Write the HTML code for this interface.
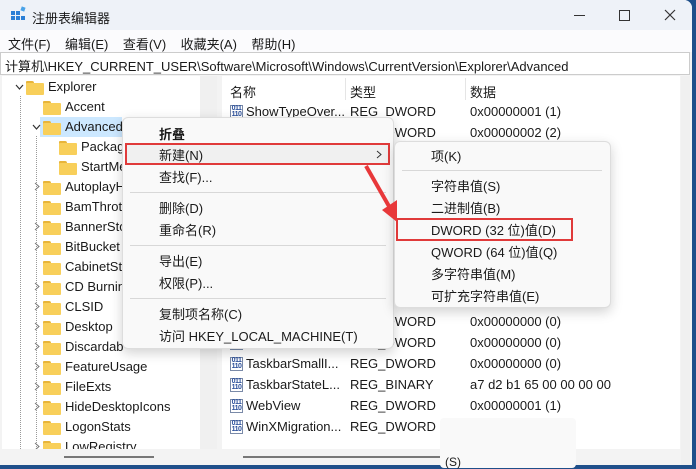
<!DOCTYPE html><html><head><meta charset="utf-8"><style>
*{margin:0;padding:0;box-sizing:border-box}
body{width:696px;height:468px;overflow:hidden;background:#1f4f8a;font-family:"Liberation Sans","Noto Sans CJK SC",sans-serif;font-size:13px;color:#1a1a1a;position:relative}
.a{position:absolute;white-space:nowrap}
.win{position:absolute;left:0;top:0;width:692px;height:465px;background:#f3f3f3;border-radius:0 8px 0 0;overflow:hidden}
.fold{position:absolute;width:18px;height:14px}
.fold:before{content:"";position:absolute;left:0;top:0;width:8px;height:4px;background:#e8b53a;border-radius:1px 2px 0 0}
.fold:after{content:"";position:absolute;left:0;top:2px;width:18px;height:12px;background:#f8cf5a;border-radius:1px}
.chev{position:absolute}
.ico{position:absolute;width:13px;height:14px;border:1px solid #7a8aa8;background:#fff;font-size:7px;line-height:6px;color:#2a4f9a;font-weight:bold;text-align:center;letter-spacing:-0.5px}
.menu{position:absolute;background:#f9f9f9;border:1px solid #ddd;border-radius:6px;box-shadow:0 4px 12px rgba(0,0,0,.18)}
.sep{position:absolute;height:1px;background:#d8d8d8}
</style></head><body>
<div class="win">
<div class="a" style="left:0;top:0;width:692px;height:30px;background:#eef2f8"></div>
<svg class="a" style="left:10px;top:6px" width="16" height="16"><rect x="1" y="5" width="4" height="4" fill="#2b7fd6"/><rect x="6" y="5" width="4" height="4" fill="#2b7fd6"/><rect x="1" y="10" width="4" height="4" fill="#2b7fd6"/><rect x="6" y="10" width="4" height="4" fill="#2b7fd6"/><rect x="11" y="10" width="4" height="4" fill="#2b7fd6"/><rect x="11" y="1" width="4" height="4" fill="#4aa3e8" transform="rotate(20 13 3)"/></svg>
<div class="a" style="left:32px;top:8px">注册表编辑器</div>
<div class="a" style="left:574px;top:15px;width:11px;height:1px;background:#333"></div>
<div class="a" style="left:619px;top:10px;width:11px;height:11px;border:1px solid #333"></div>
<svg class="a" style="left:664px;top:9px" width="12" height="12"><path d="M1 1L11 11M11 1L1 11" stroke="#333" stroke-width="1.2"/></svg>
<div class="a" style="left:0;top:30px;width:692px;height:22px;background:#fbfbfd"></div>
<div class="a" style="left:8px;top:34px">文件(F)&nbsp;&nbsp;&nbsp;&nbsp;编辑(E)&nbsp;&nbsp;&nbsp;&nbsp;查看(V)&nbsp;&nbsp;&nbsp;&nbsp;收藏夹(A)&nbsp;&nbsp;&nbsp;&nbsp;帮助(H)</div>
<div class="a" style="left:0;top:52px;width:690px;height:23px;background:#fff;border:1px solid #ccc"></div>
<div class="a" style="left:5px;top:56px">计算机\HKEY_CURRENT_USER\Software\Microsoft\Windows\CurrentVersion\Explorer\Advanced</div>
<div class="a" style="left:2px;top:76px;width:198px;height:373px;background:#fff;overflow:hidden"><div id="tree" style="position:absolute;left:-2px;top:-76px;width:200px;height:460px"></div></div>
<div class="a" style="left:200px;top:76px;width:17px;height:373px;background:#f0f0f0"></div>
<div class="a" style="left:64px;top:456px;width:90px;height:2px;background:#777"></div>
<div class="a" style="left:222px;top:76px;width:458px;height:373px;background:#fff"></div>
<div class="a" style="left:681px;top:76px;width:9px;height:389px;background:#f0f0f0"></div>
<div class="a" style="left:243px;top:456px;width:200px;height:2px;background:#777"></div>
<div class="a" style="left:345px;top:78px;width:1px;height:22px;background:#e5e5e5"></div>
<div class="a" style="left:465px;top:78px;width:1px;height:22px;background:#e5e5e5"></div>
<div class="a" style="left:230px;top:82px">名称</div><div class="a" style="left:350px;top:82px">类型</div><div class="a" style="left:470px;top:82px">数据</div>
<div id="list"></div>
</div>

<div class="menu" style="left:122px;top:117px;width:272px;height:232px"></div>
<div class="a" style="left:125px;top:143px;width:265px;height:22px;border:2px solid #e03a3a;background:#f0f0f0"></div>
<div class="a" style="left:159px;top:124px;font-weight:bold">折叠</div>
<div class="a" style="left:159px;top:145px">新建(N)</div>
<svg class="a" style="left:376px;top:150px" width="6" height="9"><path d="M1 1L5 4.5L1 8" stroke="#333" fill="none"/></svg>
<div class="a" style="left:159px;top:167px">查找(F)...</div>
<div class="sep" style="left:130px;top:192px;width:256px"></div>
<div class="a" style="left:159px;top:198px">删除(D)</div>
<div class="a" style="left:159px;top:220px">重命名(R)</div>
<div class="sep" style="left:130px;top:245px;width:256px"></div>
<div class="a" style="left:159px;top:251px">导出(E)</div>
<div class="a" style="left:159px;top:273px">权限(P)...</div>
<div class="sep" style="left:130px;top:298px;width:256px"></div>
<div class="a" style="left:159px;top:304px">复制项名称(C)</div>
<div class="a" style="left:159px;top:326px">访问 HKEY_LOCAL_MACHINE(T)</div>

<div class="menu" style="left:394px;top:141px;width:217px;height:167px"></div>
<div class="a" style="left:431px;top:146px">项(K)</div>
<div class="sep" style="left:402px;top:170px;width:200px"></div>
<div class="a" style="left:431px;top:176px">字符串值(S)</div>
<div class="a" style="left:431px;top:198px">二进制值(B)</div>
<div class="a" style="left:396px;top:218px;width:177px;height:23px;border:2px solid #e03a3a"></div>
<div class="a" style="left:431px;top:220px">DWORD (32 位)值(D)</div>
<div class="a" style="left:431px;top:242px">QWORD (64 位)值(Q)</div>
<div class="a" style="left:431px;top:264px">多字符串值(M)</div>
<div class="a" style="left:431px;top:286px">可扩充字符串值(E)</div>

<svg class="a" style="left:360px;top:160px" width="50" height="70"><path d="M6 6 L30 48" stroke="#e8383a" stroke-width="4"/><path d="M22 50 L37 62 L37 40 Z" fill="#e8383a"/></svg>

<div class="a" style="left:440px;top:418px;width:136px;height:50px;background:#f9f9f9;border-radius:4px"></div>
<div class="a" style="left:445px;top:455px;font-size:12px">(S)</div>

<script>
var t=[["Explorer",19,0,"v"],["Accent",36,1,""],["Advanced",36,1,"v"],["Packag",52,2,""],["StartMe",52,2,""],["AutoplayH",36,1,">"],["BamThrot",36,1,""],["BannerSto",36,1,">"],["BitBucket",36,1,">"],["CabinetSta",36,1,""],["CD Burnin",36,1,">"],["CLSID",36,1,">"],["Desktop",36,1,">"],["Discardab",36,1,">"],["FeatureUsage",36,1,">"],["FileExts",36,1,">"],["HideDesktopIcons",36,1,">"],["LogonStats",36,1,""],["LowRegistry",36,1,">"]];
var h='<div class="a" style="left:40px;top:117px;width:82px;height:20px;background:#cce8ff"></div><div class="a" style="left:20px;top:96px;height:353px;border-left:1px dotted #999"></div><div class="a" style="left:36px;top:136px;height:313px;border-left:1px dotted #999"></div>';
t.forEach(function(r,i){var y=79+i*20,fx=r[1]+7;
if(r[3]=="v")h+='<svg class="chev" style="left:'+(r[1]-4)+'px;top:'+(y+5)+'px" width="9" height="6"><path d="M1 1L4.5 5L8 1" stroke="#333" fill="none" stroke-width="1.2"/></svg>';
else if(r[3]==">")h+='<svg class="chev" style="left:'+(r[1]-2)+'px;top:'+(y+3)+'px" width="6" height="9"><path d="M1 1L5 4.5L1 8" stroke="#777" fill="none"/></svg>';
h+='<div class="fold" style="left:'+fx+'px;top:'+(y+2)+'px"></div><div class="a" style="left:'+(fx+22)+'px;top:'+y+'px">'+r[0]+'</div>';});
document.getElementById("tree").innerHTML=h;
var l=[["ShowTypeOver...","REG_DWORD","0x00000001 (1)"],["","REG_DWORD","0x00000002 (2)"],["","",""],["","",""],["","",""],["","",""],["","",""],["","",""],["","",""],["","",""],["","REG_DWORD","0x00000000 (0)"],["","REG_DWORD","0x00000000 (0)"],["TaskbarSmallI...","REG_DWORD","0x00000000 (0)"],["TaskbarStateL...","REG_BINARY","a7 d2 b1 65 00 00 00 00"],["WebView","REG_DWORD","0x00000001 (1)"],["WinXMigration...","REG_DWORD",""]];
h="";l.forEach(function(r,i){var y=104+i*21;if(r[1]||r[0]){h+='<div class="ico" style="left:230px;top:'+(y+1)+'px">011<br>110</div><div class="a" style="left:246px;top:'+y+'px">'+r[0]+'</div><div class="a" style="left:350px;top:'+y+'px">'+r[1]+'</div><div class="a" style="left:470px;top:'+y+'px">'+r[2]+'</div>';}});
document.getElementById("list").innerHTML=h;
</script>
</body></html>
